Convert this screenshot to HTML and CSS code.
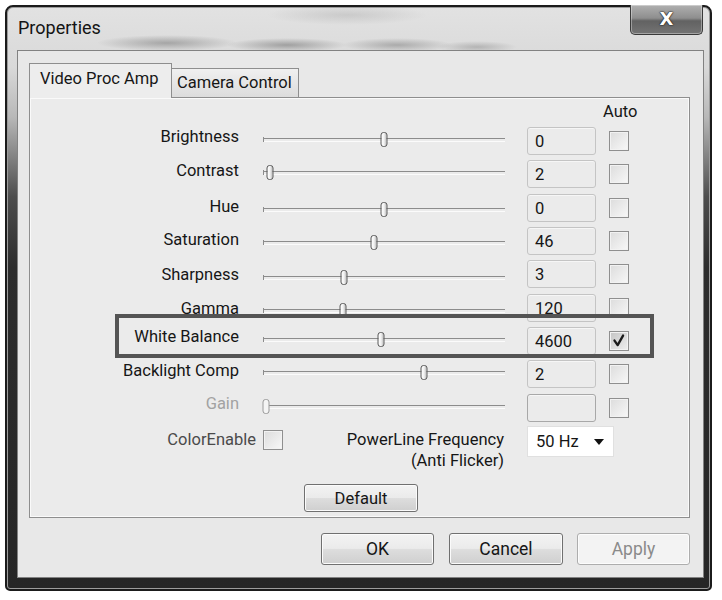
FILE: index.html
```html
<!DOCTYPE html>
<html>
<head>
<meta charset="utf-8">
<title>Properties</title>
<link rel="stylesheet" href="styles.css">
</head>
<body>
<div class="window">
  <div class="titlebar">
    <span class="title">Properties</span>
    <div class="close"><span>X</span></div>
  </div>
  <div class="client">
    <div class="tabs">
      <div class="tab active">Video Proc Amp</div>
      <div class="tab">Camera Control</div>
    </div>
    <div class="panel">
      <div class="autohead"><span>Auto</span></div>

      <div class="row"><span class="label">Brightness</span><div class="slider"><span class="thumb" style="left:50%"></span></div><span class="val">0</span><span class="chk"></span></div>
      <div class="row"><span class="label">Contrast</span><div class="slider"><span class="thumb" style="left:3%"></span></div><span class="val">2</span><span class="chk"></span></div>
      <div class="row low"><span class="label">Hue</span><div class="slider"><span class="thumb" style="left:50%"></span></div><span class="val">0</span><span class="chk"></span></div>
      <div class="row low"><span class="label">Saturation</span><div class="slider"><span class="thumb" style="left:46%"></span></div><span class="val">46</span><span class="chk"></span></div>
      <div class="row lower"><span class="label">Sharpness</span><div class="slider"><span class="thumb" style="left:33.5%"></span></div><span class="val">3</span><span class="chk"></span></div>
      <div class="row lower"><span class="label">Gamma</span><div class="slider"><span class="thumb" style="left:33%"></span></div><span class="val">120</span><span class="chk"></span></div>
      <div class="row"><span class="label">White Balance</span><div class="slider"><span class="thumb" style="left:48.8%"></span></div><span class="val">4600</span><span class="chk checked"><svg viewBox="0 0 20 20" width="18" height="18"><path d="M5 9.5 L8.5 14.5 L14.5 4" fill="none" stroke="#1a1a1a" stroke-width="2.6" stroke-linecap="round" stroke-linejoin="round"/></svg></span></div>
      <div class="row"><span class="label">Backlight Comp</span><div class="slider"><span class="thumb" style="left:66.5%"></span></div><span class="val">2</span><span class="chk"></span></div>
      <div class="row disabled"><span class="label">Gain</span><div class="slider"><span class="thumb" style="left:1.3%"></span></div><span class="val"></span><span class="chk"></span></div>

      <div class="extra">
        <span class="ce-label">ColorEnable</span>
        <span class="chk ce-chk"></span>
        <div class="plf"><span>PowerLine Frequency</span><span>(Anti Flicker)</span></div>
        <div class="select"><span>50 Hz</span><span class="arrow"></span></div>
      </div>

      <div class="defrow"><div class="btn default">Default</div></div>

      <div class="highlight"></div>
    </div>
    <div class="buttons">
      <div class="btn ok">OK</div>
      <div class="btn cancel">Cancel</div>
      <div class="btn apply">Apply</div>
    </div>
  </div>
</div>
</body>
</html>
```

FILE: styles.css
```css
* { box-sizing: border-box; }

body {
  margin: 0;
  background: #ffffff;
  font-family: Roboto, "Liberation Sans", sans-serif;
  color: #161616;
  font-size: 16.5px;
}

.window {
  margin: 5px 0 0 5px;
  width: 707px;
  height: 586px;
  border: 2px solid #1b1b1b;
  border-radius: 8px 8px 5px 5px;
  padding: 0 6px 11px 10px;
  display: flex;
  flex-direction: column;
  background: linear-gradient(to bottom, #e2e2e2 0, #d9d9d9 60px, #b8b8b8 110px, #4d4d4d 190px, #2d2d2d 260px, #262626 100%);
  box-shadow: inset 0 0 0 1px #9c9c9c;
}

.titlebar {
  height: 43px;
  display: flex;
  align-items: flex-start;
  background:
    radial-gradient(ellipse 70px 8px at 150px 36px, rgba(110,110,110,0.5), transparent),
    radial-gradient(ellipse 60px 7px at 270px 38px, rgba(100,100,100,0.5), transparent),
    radial-gradient(ellipse 55px 7px at 380px 38px, rgba(110,110,110,0.45), transparent),
    radial-gradient(ellipse 40px 6px at 460px 40px, rgba(120,120,120,0.4), transparent),
    radial-gradient(ellipse 80px 10px at 330px 8px, rgba(150,150,150,0.3), transparent);
}

.title {
  margin: 10px 0 0 1px;
  font-size: 18px;
  line-height: 22px;
  color: #141414;
}

.close {
  margin: -2px 1px 0 auto;
  width: 73px;
  height: 30px;
  border: 1px solid #3a3a3a;
  border-top: none;
  border-radius: 0 0 5px 5px;
  background: linear-gradient(to bottom, #b0b0b0 0%, #8e8e8e 45%, #626262 55%, #747474 100%);
  box-shadow: inset 0 0 0 1px rgba(255,255,255,0.35);
  display: flex;
  align-items: center;
  justify-content: center;
}

.close span {
  font-family: "DejaVu Sans", sans-serif;
  font-weight: bold;
  font-size: 18px;
  color: #ffffff;
  text-shadow: 0 0 2px #222, 0 0 1px #222, 0 0 1px #222;
  margin-top: -2px;
}

.client {
  flex: 1;
  border: 1px solid #828282;
  background: #e8e8e8;
  padding: 12px 13px 12px 11px;
  display: flex;
  flex-direction: column;
}

.tabs {
  height: 34px;
  display: flex;
  align-items: flex-end;
}

.tab {
  height: 29px;
  width: 128px;
  border: 1px solid #8e8e8e;
  border-bottom: none;
  background: linear-gradient(to bottom, #f0f0f0, #dcdcdc);
  padding-left: 5px;
  line-height: 27px;
  white-space: nowrap;
}

.tab.active {
  position: relative;
  z-index: 2;
  width: 143px;
  height: 35px;
  margin-bottom: -1px;
  margin-right: -1px;
  background: #ededed;
  padding-left: 10px;
  line-height: 30px;
}

.panel {
  position: relative;
  width: 661px;
  height: 421px;
  border: 1px solid #8e8e8e;
  background: #ebebeb;
  box-shadow: inset 0 0 0 1px #fafafa;
}

.autohead {
  height: 23.3px;
  padding: 4px 0 0 573px;
  line-height: 20px;
}

.row {
  height: 33.33px;
  display: flex;
  align-items: center;
}

.label {
  width: 209px;
  text-align: right;
  line-height: 20px;
  margin-top: -1px;
  white-space: nowrap;
}

.slider {
  position: relative;
  width: 242px;
  height: 14px;
  margin-left: 24px;
  margin-top: 2px;
}

.row.low .label { margin-top: 5px; }
.row.low .slider { margin-top: 8px; }
.row.lower .label { margin-top: 8px; }
.row.lower .slider { margin-top: 11px; }

.slider::before {
  content: "";
  position: absolute;
  left: 0;
  right: 0;
  top: 6px;
  height: 2px;
  border-top: 1px solid #8c8c8c;
  border-bottom: 1px solid #fbfbfb;
}

.slider::after {
  content: "";
  position: absolute;
  left: 0;
  top: 5px;
  width: 1px;
  height: 5px;
  background: #8c8c8c;
}

.thumb {
  position: absolute;
  top: 0;
  width: 7px;
  height: 15px;
  transform: translateX(-50%);
  border: 1px solid #5a5a5a;
  border-radius: 3px;
  background: linear-gradient(to right, #ffffff 0%, #f2f2f2 50%, #bdbdbd 100%);
  z-index: 1;
}

.val {
  width: 69px;
  height: 28px;
  margin-left: 22px;
  margin-top: 6px;
  border: 1px solid #c4c4c4;
  border-radius: 3px;
  box-shadow: inset 0 1px 0 #f6f6f6;
  background: #ebebeb;
  padding-left: 7px;
  line-height: 27px;
}

.chk {
  width: 20px;
  height: 20px;
  margin-left: 13px;
  margin-top: 6px;
  border: 1px solid #8f8f8f;
  background: linear-gradient(135deg, #dcdcdc, #f8f8f8);
  box-shadow: inset 0 0 0 1px #f2f2f2;
  display: flex;
  align-items: center;
  justify-content: center;
}

.chk.checked {
  background: linear-gradient(135deg, #c4c4c4, #efefef);
}

.row.disabled .label { color: #a2a2a2; }
.row.disabled .thumb { border-color: #9a9a9a; background: #f4f4f4; }
.row.disabled .val { border-color: #a8a8a8; }

.extra {
  display: flex;
  align-items: flex-start;
  margin-top: 8px;
  height: 43px;
}

.ce-label {
  width: 226px;
  text-align: right;
  color: #4a4a4a;
  line-height: 20px;
  margin-top: 1px;
}

.chk.ce-chk {
  margin-left: 7px;
  margin-top: 1px;
}

.plf {
  width: 223px;
  display: flex;
  flex-direction: column;
  align-items: flex-end;
  line-height: 21px;
  padding-right: 2px;
  white-space: nowrap;
}

.select {
  width: 87px;
  height: 31px;
  margin-left: 21px;
  margin-top: -3px;
  background: #ffffff;
  border: 1px solid #e0e0e0;
  display: flex;
  align-items: center;
  padding: 0 9px 0 8px;
}

.select .arrow {
  margin-left: auto;
  width: 0;
  height: 0;
  border-left: 5px solid transparent;
  border-right: 5px solid transparent;
  border-top: 6px solid #111;
}

.defrow {
  margin-top: 12px;
  padding-left: 274px;
}

.btn {
  height: 32px;
  border: 1px solid #707070;
  border-radius: 3px;
  background: linear-gradient(to bottom, #f3f3f3 0%, #ebebeb 48%, #dddddd 52%, #cfcfcf 100%);
  box-shadow: inset 0 0 0 1px #fbfbfb;
  display: flex;
  align-items: center;
  justify-content: center;
  font-size: 17.5px;
  color: #161616;
}

.btn.default {
  width: 114px;
  height: 28px;
  font-size: 16.5px;
}

.highlight {
  position: absolute;
  left: 85px;
  top: 216px;
  width: 539px;
  height: 44px;
  border: 4px solid #545454;
  z-index: 3;
}

.buttons {
  margin-top: 15px;
  display: flex;
  justify-content: flex-end;
}

.btn.ok { width: 113px; }
.btn.cancel { width: 114px; margin-left: 15px; }
.btn.apply {
  width: 113px;
  margin-left: 14px;
  border-color: #adadad;
  background: #f3f3f3;
  box-shadow: inset 0 0 0 1px #fcfcfc;
  color: #8a8a8a;
}
```
